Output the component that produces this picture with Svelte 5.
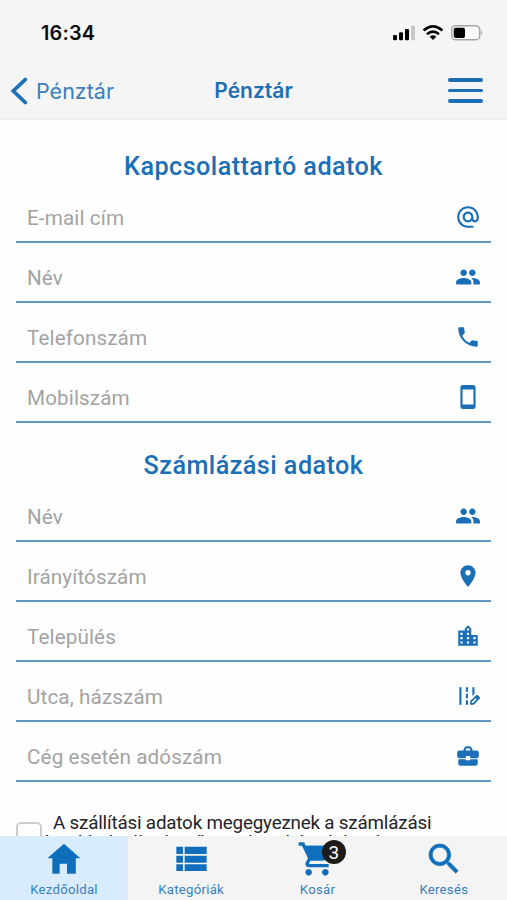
<script>
  const icons = {
    at: 'M12 2C6.48 2 2 6.48 2 12s4.48 10 10 10h5v-2h-5c-4.34 0-8-3.66-8-8s3.66-8 8-8 8 3.66 8 8v1.43c0 .79-.71 1.57-1.5 1.57s-1.5-.78-1.5-1.57V12c0-2.76-2.24-5-5-5s-5 2.24-5 5 2.24 5 5 5c1.38 0 2.64-.56 3.54-1.47.65.89 1.77 1.47 2.96 1.47 1.97 0 3.5-1.6 3.5-3.57V12c0-5.52-4.48-10-10-10zm0 13c-1.66 0-3-1.34-3-3s1.34-3 3-3 3 1.34 3 3-1.34 3-3 3z',
    people: 'M16 11c1.66 0 2.99-1.34 2.99-3S17.66 5 16 5s-3 1.34-3 3 1.34 3 3 3zm-8 0c1.66 0 2.99-1.34 2.99-3S9.66 5 8 5 5 6.34 5 8s1.34 3 3 3zm0 2c-2.33 0-7 1.17-7 3.5V19h14v-2.5c0-2.33-4.67-3.5-7-3.5zm8 0c-.29 0-.62.02-.97.05 1.16.84 1.97 1.97 1.97 3.45V19h6v-2.5c0-2.33-4.67-3.5-7-3.5z',
    phone: 'M6.62 10.79c1.44 2.83 3.76 5.14 6.59 6.59l2.2-2.2c.27-.27.67-.36 1.02-.24 1.12.37 2.33.57 3.57.57.55 0 1 .45 1 1V20c0 .55-.45 1-1 1C10.61 21 3 13.39 3 4c0-.55.45-1 1-1h3.5c.55 0 1 .45 1 1 0 1.25.2 2.45.57 3.57.11.35.03.74-.25 1.02l-2.2 2.2z',
    mobile: 'M17 1.01L7 1c-1.1 0-2 .9-2 2v18c0 1.1.9 2 2 2h10c1.1 0 2-.9 2-2V3c0-1.1-.9-1.99-2-1.99zM17 19H7V5h10v14z',
    place: 'M12 2C8.13 2 5 5.13 5 9c0 5.25 7 13 7 13s7-7.75 7-13c0-3.87-3.13-7-7-7zm0 9.5c-1.38 0-2.5-1.12-2.5-2.5s1.12-2.5 2.5-2.5 2.5 1.12 2.5 2.5-1.12 2.5-2.5 2.5z',
    city: 'M15 11V5l-3-3-3 3v2H3v14h18V11h-6zm-8 8H5v-2h2v2zm0-4H5v-2h2v2zm0-4H5V9h2v2zm6 8h-2v-2h2v2zm0-4h-2v-2h2v2zm0-4h-2V9h2v2zm0-4h-2V5h2v2zm6 12h-2v-2h2v2zm0-4h-2v-2h2v2z',
    road: 'M18 4h-2v7.9l2-2V4zM4 4h2v16H4V4zM10 4h2v4h-2V4zM10 10h2v4h-2v-4zM10 16h2v4h-2v-4zM22.56 12.59l-1.15-1.15c-.59-.59-1.54-.59-2.12 0L14 16.73V20h3.27l5.29-5.29c.59-.58.59-1.53 0-2.12zM16.58 18.45h-1.03v-1.03L19 13.97 20.03 15l-3.45 3.45z',
    work: 'M10 16v-1H3.01L3 19c0 1.11.89 2 2 2h14c1.11 0 2-.89 2-2v-4h-7v1h-4zm10-9h-4.01V5l-2-2h-4l-2 2v2H4c-1.1 0-2 .9-2 2v3c0 1.11.89 2 2 2h6v-2h4v2h6c1.1 0 2-.9 2-2V9c0-1.1-.9-2-2-2zm-6 0h-4V5h4v2z',
    home: 'M9.4 20.8v-6h4.4v6h5.3v-9.2h2.7L12 2.9 2 11.6h3v9.2z',
    list: 'M3.2 14.2h4v-4.2h-4v4.2zm0 5h4v-4h-4v4zM3.2 9h4V4.6h-4V9zm5 5.2h13.2v-4.2H8.2v4.2zm0 5h13.2v-4H8.2v4zM8.2 4.6V9h13.2V4.6H8.2z',
    cart: 'M7 18c-1.1 0-1.99.9-1.99 2S5.9 22 7 22s2-.9 2-2-.9-2-2-2zM1 2v2h2l3.6 7.59-1.35 2.45c-.16.28-.25.61-.25.96 0 1.1.9 2 2 2h12v-2H7.42c-.14 0-.25-.11-.25-.25l.03-.12.9-1.63h7.45c.75 0 1.41-.41 1.75-1.03l3.58-6.49c.08-.14.12-.31.12-.48 0-.55-.45-1-1-1H5.21l-.94-2H1zm16 16c-1.1 0-1.99.9-1.99 2s.89 2 1.99 2 2-.9 2-2-.9-2-2-2z',
    search: 'M15.5 14h-.79l-.28-.27C15.41 12.59 16 11.11 16 9.5 16 5.91 13.09 3 9.5 3S3 5.91 3 9.5 5.91 16 9.5 16c1.61 0 3.09-.59 4.23-1.57l.27.28v.79l5 4.99L20.49 19l-4.99-5zm-6 0C7.01 14 5 11.99 5 9.5S7.01 5 9.5 5 14 7.01 14 9.5 11.99 14 9.5 14z'
  };
  const sections = [
    { title: 'Kapcsolattartó adatok', fields: [['E-mail cím', 'at'], ['Név', 'people'], ['Telefonszám', 'phone'], ['Mobilszám', 'mobile']] },
    { title: 'Számlázási adatok', fields: [['Név', 'people'], ['Irányítószám', 'place'], ['Település', 'city'], ['Utca, házszám', 'road'], ['Cég esetén adószám', 'work']] }
  ];
  const tabs = [['Kezdőoldal', 'home'], ['Kategóriák', 'list'], ['Kosár', 'cart'], ['Keresés', 'search']];
</script>

<div class="screen">
  <header>
    <div class="status">
      <span class="time">16:34</span>
      <svg class="signals" width="92" height="18" viewBox="0 0 92 18">
        <rect x="1" y="11" width="4" height="5.3" rx="1.2" />
        <rect x="7" y="8.3" width="4" height="8" rx="1.2" />
        <rect x="13" y="5" width="4" height="11.3" rx="1.2" />
        <rect x="19" y="1.6" width="4" height="14.7" rx="1.2" fill="#c8c8c8" />
        <g fill="none" stroke="#000" stroke-width="2.7">
          <path d="M31.6 6.6Q41 -1.9 50.4 6.6" />
          <path d="M35 10.3Q41 4.9 47 10.3" />
        </g>
        <path d="M37.7 12.7Q41 10 44.3 12.7L41 16Z" />
        <rect x="59.7" y="1.7" width="28" height="14" rx="3.8" fill="#fafafa" stroke="#a5a5a5" stroke-width="1.4" />
        <rect x="61.7" y="3.7" width="11.3" height="10.3" rx="2" />
        <path class="nub" d="M89.2 6.5q2 2 0 4.5z" />
      </svg>
    </div>
    <div class="bar">
      <div class="back">
        <svg width="18" height="28" viewBox="0 0 18 28"><path d="M15.3 2.5 3.3 14l12 11.5" fill="none" stroke="#1b6fb6" stroke-width="3.8" stroke-linecap="round" stroke-linejoin="miter" /></svg>
        <span>Pénztár</span>
      </div>
      <h1>Pénztár</h1>
      <div class="menu"><i></i><i></i><i></i></div>
    </div>
  </header>

  <main>
    {#each sections as section}
      <section>
        <h2>{section.title}</h2>
        {#each section.fields as [label, icon]}
          <div class="field">
            <span>{label}</span>
            <svg width="26" height="26" viewBox="0 0 24 24"><path d={icons[icon]} /></svg>
          </div>
        {/each}
      </section>
    {/each}
    <div class="same">
      <span class="box"></span>
      <div class="terms">
        <div class="first">A szállítási adatok megegyeznek a számlázási</div>
        <div class="next">adatokkal, ellenkező esetben kérjük kitölteni</div>
      </div>
    </div>
  </main>

  <nav>
    {#each tabs as [label, icon], i}
      <div class="tab" class:active={i === 0}>
        <div class="pic {icon}">
          <svg width="40" height="40" viewBox="0 0 24 24">
            {#if icon === 'cart'}<path d="M4.5 4H21l-4.5 8H7.5z" />{/if}
            <path d={icons[icon]} />
          </svg>
          {#if icon === 'cart'}<b>3</b>{/if}
        </div>
        <span>{label}</span>
      </div>
    {/each}
  </nav>
</div>

<style>
  :global(body) { background: #fefefe; }
  .screen { width: 507px; height: 900px; overflow: hidden; display: flex; flex-direction: column; background: #fefefe; font-family: Roboto, sans-serif; color: #1b6fb6; }
  header { box-sizing: border-box; flex: none; height: 120px; background: #f5f5f5; border-bottom: 2px solid #f0f0f0; font-family: Inter, sans-serif; }
  .status { display: flex; justify-content: space-between; align-items: center; height: 66px; padding: 0 23px 0 41px; color: #0b0b0b; }
  .time { font-size: 19.8px; font-weight: 600; letter-spacing: 0.2px; }
  .bar { display: grid; grid-template-columns: 1fr auto 1fr; align-items: center; height: 49px; padding: 0 24px 0 10px; }
  .back { display: flex; align-items: center; gap: 8px; font-size: 21.5px; color: #3a80bb; }
  h1 { margin: 0; padding-left: 14px; font-size: 21px; font-weight: 600; }
  .menu { justify-self: end; width: 35px; display: flex; flex-direction: column; gap: 7px; }
  .menu i { height: 3.5px; border-radius: 2px; background: #1b6fb6; }
  main { flex: 1; min-height: 0; overflow: hidden; padding: 0 16px; }
  section { height: 303px; }
  section:nth-child(2) { height: 380px; }
  h2 { margin: 0; height: 62.7px; line-height: 94px; text-align: center; font-size: 25.2px; font-weight: 500; letter-spacing: 0.45px; }
  section:nth-child(2) h2 { height: 58.7px; line-height: 85px; }
  .field { box-sizing: border-box; height: 60.1px; border-bottom: 2px solid #6199c4; padding: 12px 10px 0 11px; display: flex; justify-content: space-between; align-items: center; color: #a3a3a3; font-size: 20.7px; letter-spacing: 0.1px; }
  svg path { fill: currentColor; }
  svg path.nub { fill: #888; }
  .back path, .signals g path { fill: none; }
  .field svg { color: #1b6fb6; margin-top: -2px; }
  .same { display: flex; color: #222428; font-size: 18.8px; line-height: 19px; white-space: nowrap; }
  .box { box-sizing: border-box; flex: none; width: 26px; height: 26px; margin-top: 19px; border: 2px solid #ccc; border-radius: 5px; }
  .terms { padding-top: 10.5px; }
  .first { margin-left: 11px; letter-spacing: -0.18px; }
  .next { margin-left: -14px; padding-top: 1px; letter-spacing: 0.45px; }
  nav { flex: none; display: grid; grid-template-columns: 128px 1fr 1fr 1fr; height: 64px; background: #f4f4f4; }
  .tab { display: flex; flex-direction: column; align-items: center; font-size: 13.2px; letter-spacing: 0.25px; color: #3a80bb; }
  .active { background: #d9ecfd; }
  .pic { position: relative; height: 46px; color: #106fbd; }
  .pic svg { display: block; margin-top: 3px; }
  .pic.cart svg { margin-top: 3px; margin-right: 1px; }
  .pic.search path { stroke: currentColor; stroke-width: 0.4; }
  b { position: absolute; left: 25px; top: 4px; width: 24px; height: 24px; border-radius: 50%; background: #1c1c1c; color: #fff; text-align: center; font: 400 19px/25px Roboto, sans-serif; }
</style>
